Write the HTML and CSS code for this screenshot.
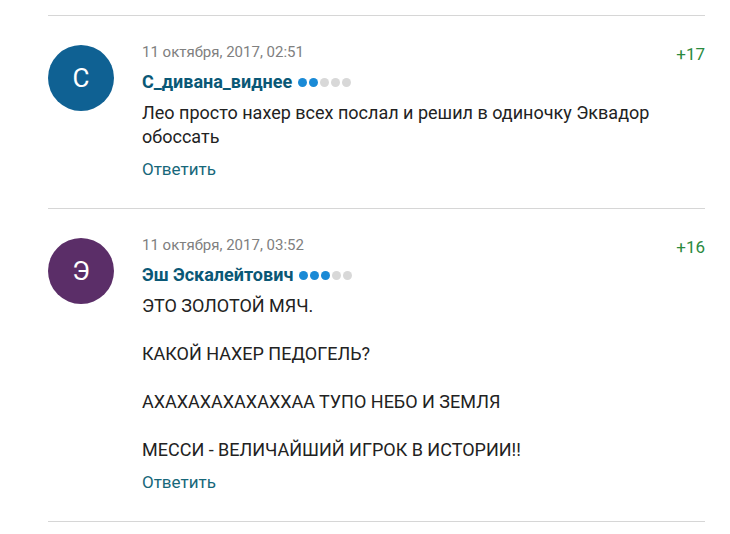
FILE: index.html
```html
<!DOCTYPE html>
<html lang="ru">

<head>
    <meta charset="UTF-8">
    <title>Комментарии</title>
    <link rel="stylesheet" href="styles.css">
</head>

<body>
    <div class="comments">
        <div class="comment">
            <div class="avatar avatar-blue">С</div>
            <div class="comment-body">
                <div class="comment-head">
                    <span class="date">11 октября, 2017, 02:51</span>
                    <span class="rating">+17</span>
                </div>
                <div class="author">
                    С_дивана_виднее
                    <span class="level">
                        <i class="on"></i><i class="on"></i><i></i><i></i><i></i>
                    </span>
                </div>
                <div class="text">
                    <p>Лео просто нахер всех послал и решил в одиночку Эквадор обоссать</p>
                </div>
                <a class="reply" href="#">Ответить</a>
            </div>
        </div>

        <div class="comment">
            <div class="avatar avatar-purple">Э</div>
            <div class="comment-body">
                <div class="comment-head">
                    <span class="date">11 октября, 2017, 03:52</span>
                    <span class="rating">+16</span>
                </div>
                <div class="author">
                    Эш Эскалейтович
                    <span class="level">
                        <i class="on"></i><i class="on"></i><i class="on"></i><i></i><i></i>
                    </span>
                </div>
                <div class="text">
                    <p>ЭТО ЗОЛОТОЙ МЯЧ.</p>
                    <p>КАКОЙ НАХЕР ПЕДОГЕЛЬ?</p>
                    <p>АХАХАХАХАХАХХАА ТУПО НЕБО И ЗЕМЛЯ</p>
                    <p>МЕССИ - ВЕЛИЧАЙШИЙ ИГРОК В ИСТОРИИ!!</p>
                </div>
                <a class="reply" href="#">Ответить</a>
            </div>
        </div>
    </div>
</body>

</html>
```

FILE: styles.css
```css
* {
    margin: 0;
    padding: 0;
    box-sizing: border-box;
    font-family: 'Roboto', 'Liberation Sans', sans-serif;
}

body {
    background-color: #ffffff;
    color: #222;
}

.comments {
    margin: 15px 25px 0 48px;
    border-top: 1px solid #d6d6d6;
}

.comment {
    display: flex;
    gap: 28px;
    padding: 26px 0 28px;
    border-bottom: 1px solid #d6d6d6;
}

.avatar {
    flex: 0 0 66px;
    width: 66px;
    height: 66px;
    border-radius: 50%;
    color: #ffffff;
    font-size: 26px;
    display: flex;
    align-items: center;
    justify-content: center;
    margin-top: 3px;
}

.avatar-blue {
    background-color: #0f6193;
}

.avatar-purple {
    background-color: #5b2e68;
}

.comment-body {
    flex: 1;
}

.comment-head {
    display: flex;
    justify-content: space-between;
    align-items: flex-start;
}

.date {
    font-size: 15px;
    line-height: 20px;
    color: #808080;
}

.rating {
    font-size: 17px;
    line-height: 20px;
    margin-top: 2px;
    color: #2b8a3e;
}

.author {
    font-size: 18px;
    line-height: 22px;
    font-weight: bold;
    color: #0a5876;
    margin-top: 7px;
    display: flex;
    align-items: center;
    gap: 6px;
}

.level {
    display: flex;
    gap: 2px;
}

.level i {
    width: 9px;
    height: 9px;
    border-radius: 50%;
    background-color: #d8d8d8;
}

.level i.on {
    background-color: #1a8ad6;
}

.text {
    margin-top: 8px;
    font-size: 18px;
    line-height: 24px;
    padding-right: 40px;
}

.text p + p {
    margin-top: 24px;
}

.reply {
    display: inline-block;
    margin-top: 9px;
    font-size: 17px;
    line-height: 22px;
    color: #17677a;
    text-decoration: none;
}
```
